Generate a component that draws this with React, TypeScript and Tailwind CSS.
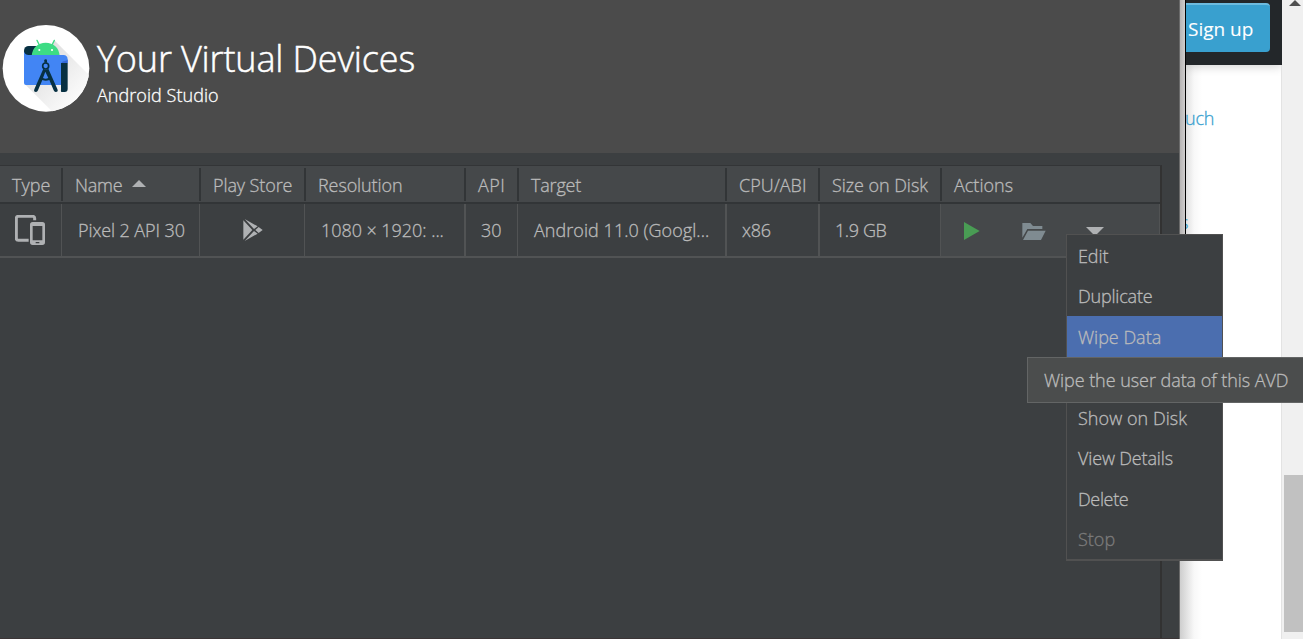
import React from "react";

const columns = [
  { label: "Type", head: "w-[61px] pl-3", body: "w-[61px]", track: "" },
  { label: "Name", head: "w-[138px] pl-3 border-l-2", body: "w-[138px] pl-4 border-l", track: "tracking-[-0.2px]" },
  { label: "Play Store", head: "w-[105px] pl-3 border-l-2", body: "w-[105px] border-l", track: "tracking-[-0.1px]" },
  { label: "Resolution", head: "w-[160px] pl-3 border-l-2", body: "w-[160px] pl-4 border-l", track: "tracking-[-0.1px]" },
  { label: "API", head: "w-[53px] pl-3 border-l-2", body: "w-[53px] pl-[15px] border-l-2", track: "tracking-[0.4px]" },
  { label: "Target", head: "w-[208px] pl-3 border-l-2", body: "w-[208px] pl-4 border-l", track: "tracking-[-0.2px]" },
  { label: "CPU/ABI", head: "w-[93px] pl-3 border-l-2", body: "w-[93px] pl-[15px] border-l-2", track: "" },
  { label: "Size on Disk", head: "w-[122px] pl-3 border-l-2", body: "w-[122px] pl-[15px] border-l-2", track: "tracking-[-0.05px]" },
  { label: "Actions", head: "w-[220px] pl-3 border-l-2", body: "w-[220px] border-l bg-[#45484a] border-r", track: "" },
];

const menuItems = [
  { label: "Edit", style: "tracking-[-0.1px]" },
  { label: "Duplicate", style: "tracking-[-0.2px]" },
  { label: "Wipe Data", style: "bg-[#4b6eaf]" },
  { label: "", style: "" },
  { label: "Show on Disk", style: "tracking-[0.05px]" },
  { label: "View Details", style: "tracking-[-0.15px]" },
  { label: "Delete", style: "tracking-[-0.35px]" },
  { label: "Stop", style: "text-[#7c7c7c]" },
];

function StudioLogo() {
  return (
    <svg className="h-[92px] w-[92px] shrink-0" viewBox="0 0 276 276">
      <defs>
        <linearGradient id="fade" x1="0.2" y1="0.2" x2="0.8" y2="0.8">
          <stop offset="0" stopColor="#dedede" />
          <stop offset="1" stopColor="#fbfbfb" />
        </linearGradient>
        <clipPath id="disc"><circle cx="138" cy="139" r="130" /></clipPath>
      </defs>
      <circle cx="138" cy="139" r="130" fill="#fff" />
      <path clipPath="url(#disc)" d="M163 55L276 168V276H164L74 186Z" fill="url(#fade)" />
      <path d="M86 72h26v28H72V86a14 14 0 0 1 14-14z" fill="#073042" />
      <path d="M95 101C97 77 114 62 137 62s40 15 42 39z" fill="#3ddc84" />
      <path d="M111 55l7 14M163 55l-7 14" stroke="#3ddc84" strokeWidth="4" strokeLinecap="round" />
      <circle cx="118" cy="84" r="3.2" fill="#fff" />
      <circle cx="156" cy="84" r="3.2" fill="#fff" />
      <path d="M72 88q2 11 14 11H190q13 0 13 14v10H186v66H78q-6 0-6-6z" fill="#4285f4" />
      <path d="M203 112v11H184q3-6 10-6 7 0 9-5z" fill="#3367d6" />
      <path d="M183 123h20v78q0 9-9 9h-10q-2-2-1-8z" fill="#073042" />
      <path d="M133 122v-7q0-3 4-3t4 3v7z" fill="#073042" />
      <circle cx="137" cy="132" r="9" fill="none" stroke="#073042" strokeWidth="5" />
      <path d="M130 140L103 202q-3 8 5 8 4 0 6-5l13-31q10 5 21 0l13 31q2 5 6 5 9 0 5-9L145 140q-8 5-15 0zM136 149l9 19q-8 4-16 0z" fill="#073042" fillRule="evenodd" />
    </svg>
  );
}

function DeviceIcon() {
  return (
    <svg className="ml-[15px] h-[31px] w-[31px]" viewBox="0 0 93 93" fill="none">
      <path d="M41 76H10q-6 0-6-6V10q0-6 6-6H53q6 0 6 6v6" stroke="#afb1b3" strokeWidth="9" />
      <path fillRule="evenodd" d="M53 21h29q8 0 8 8v53q0 8-8 8H53q-8 0-8-8V29q0-8 8-8zM53 33v43h29V33zM62 81v4h11v-4z" fill="#afb1b3" />
    </svg>
  );
}

function PlayIcon() {
  return (
    <svg className="ml-[43px] h-[22px] w-[20px]" viewBox="0 0 60 66" fill="#afb1b3">
      <path d="M1 4L28 33 1 62zM5 0L44 22 33 30zM37 33L47 24 59 33 47 42zM5 66L44 44 33 36z" />
    </svg>
  );
}

function Actions() {
  return (
    <>
      <svg className="ml-[23px] mt-0.5 h-[18px] w-4" viewBox="0 0 48 54"><path d="M0 0L47 27 0 54z" fill="#499c54" /></svg>
      <svg className="ml-[42px] mt-[3px] h-[17px] w-6" viewBox="0 0 72 51" fill="#7f8b91"><path d="M1 0H25L33 9H61V18H16L1 44zM18 23H71L57 51H3z" /></svg>
      <svg className="ml-10 mt-[3px] h-[9px] w-[18px]" viewBox="0 0 54 27"><path d="M0 0H54L27 27z" fill="#afb1b3" /></svg>
    </>
  );
}

const cells: React.ReactNode[] = [
  <DeviceIcon />,
  <span className="tracking-[-0.1px]">Pixel 2 API 30</span>,
  <PlayIcon />,
  <span className="tracking-[-0.05px]">1080 × 1920: ...</span>,
  <span>30</span>,
  <span className="tracking-[0.05px]">Android 11.0 (Googl...</span>,
  <span className="tracking-[-0.3px]">x86</span>,
  <span className="tracking-[-0.4px]">1.9 GB</span>,
  <Actions />,
];

export default function App() {
  return (
    <div className="relative flex h-[639px] w-[1303px] overflow-hidden whitespace-nowrap bg-white font-['Open_Sans',sans-serif] text-[18px] font-light leading-6 text-[#bbbbbb] [-webkit-text-stroke:0.3px_currentColor]">
      <main className="flex w-[1180px] shrink-0 flex-col border-r border-[#6a6a6a] bg-[#3c3f41]">
        <header className="flex h-[153px] shrink-0 bg-[#4b4b4b] pt-[22px] text-white">
          <StudioLogo />
          <div className="ml-[5px] pt-3.5">
            <h1 className="text-[36px] leading-[46px] tracking-[-0.15px] [-webkit-text-stroke:0.5px_currentColor]">Your Virtual Devices</h1>
            <p className="mt-px tracking-[0.05px]">Android Studio</p>
          </div>
        </header>
        <section className="mt-3 flex w-[1162px] grow flex-col border-r-2 border-t border-r-[#323232] border-t-[#333537]">
          <div className="flex h-[38px] shrink-0 border-b-2 border-[#323537] bg-[#45484a]">
            {columns.map((c) => (
              <div key={c.label} className={`mt-0.5 flex h-[33px] items-center border-[#323537] pt-px ${c.head}`}>
                <span className={c.track}>{c.label}</span>
                {c.label === "Name" && (
                  <svg className="mb-[3px] ml-[9px] h-[7px] w-[14px]" viewBox="0 0 14 7"><path d="M0 7H14L7 0z" fill="#afb1b3" /></svg>
                )}
              </div>
            ))}
          </div>
          <div className="flex h-[54px] shrink-0 border-b-2 border-[#515354]">
            {columns.map((c, i) => (
              <div key={c.label} className={`flex items-center border-[#515354] ${c.body}`}>{cells[i]}</div>
            ))}
          </div>
        </section>
        <div className="h-px w-full bg-[#3b3536]" />
      </main>

      <aside className="flex w-[123px] shrink-0 bg-[linear-gradient(90deg,#cecece_0px,#e6e6e6_8px,#f8f8f8_14px,#ffffff_22px)]">
        <div className="h-[300px] w-1.5 shrink-0 border-r border-black bg-[linear-gradient(90deg,#b5b3b3,#cfcdcd)]" />
        <div className="flex w-[96px] shrink-0 flex-col overflow-hidden">
          <div className="h-[65px] shrink-0 bg-[#23272a] pt-[3px] shadow-[0_1px_10px_rgba(0,0,0,0.2)]">
            <div className="h-[49px] w-[84px] rounded-r-[4px] border-t-2 border-[#6dbbdf] bg-[#39a0cf] pl-0.5 pt-3 text-[19px] font-normal text-white [-webkit-text-stroke:0.1px_currentColor]">Sign up</div>
          </div>
          <div className="grow border-r border-[#e3e3e3] pt-[41px] text-[#39a0cf]">
            <div className="-ml-px tracking-[-0.2px]">uch</div>
            <div className="-ml-[6px] mt-[80px]">s</div>
          </div>
        </div>
        <div className="w-[21px] bg-[#f0f0f0]">
          <svg className="ml-[7px] block h-1.5 w-3" viewBox="0 0 12 6"><path d="M0 6L6 0 12 6z" fill="#505050" /></svg>
          <div className="ml-0.5 mt-[469px] h-[157px] bg-[#c1c1c1]" />
        </div>
      </aside>

      <nav className="absolute left-[1066px] top-[234px] flex h-[327px] w-[157px] flex-col border border-b-2 border-[#515151] bg-[#3c3f41]">
        {menuItems.map((m, i) => (
          <div key={i} className={`flex h-[40.5px] shrink-0 items-center pl-[11px] pt-px ${m.style}`}>{m.label}</div>
        ))}
      </nav>
      <div className="absolute left-[1027px] top-[357px] flex h-[46px] w-[276px] items-center border border-r-0 border-[#636565] bg-[#4b4d4d] pl-4 tracking-[-0.05px]">
        Wipe the user data of this AVD
      </div>
    </div>
  );
}
